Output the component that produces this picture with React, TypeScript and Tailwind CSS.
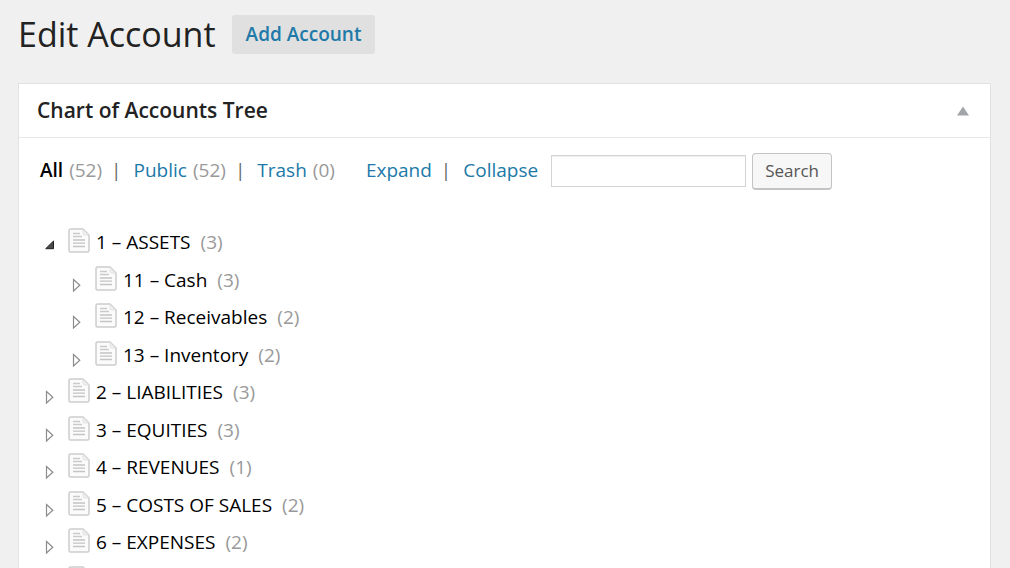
import React, { useState } from "react";

type Account = { label: string; count: number | null; level: 1 | 2; open?: boolean };

const accounts: Account[] = [
  { label: "1 – ASSETS", count: 3, level: 1, open: true },
  { label: "11 – Cash", count: 3, level: 2 },
  { label: "12 – Receivables", count: 2, level: 2 },
  { label: "13 – Inventory", count: 2, level: 2 },
  { label: "2 – LIABILITIES", count: 3, level: 1 },
  { label: "3 – EQUITIES", count: 3, level: 1 },
  { label: "4 – REVENUES", count: 1, level: 1 },
  { label: "5 – COSTS OF SALES", count: 2, level: 1 },
  { label: "6 – EXPENSES", count: 2, level: 1 },
  { label: "", count: null, level: 1 },
];

function DocumentIcon() {
  return (
    <svg width="22" height="25" viewBox="0 0 22 25" fill="none" className="shrink-0" aria-hidden="true">
      <path
        d="M2.5 1H15L21 7V22.5Q21 24 19.5 24H2.5Q1 24 1 22.5V2.5Q1 1 2.5 1Z"
        fill="#fbfbfb"
        stroke="#cdcdcd"
        strokeWidth="1.5"
      />
      <path d="M15 1.5V5.5Q15 7 16.5 7H20.5Z" fill="#f0f0f0" stroke="#dedede" strokeWidth="0.8" />
      <path d="M5 5.5H12M5 8.5H14" stroke="#cacaca" strokeWidth="1.3" />
      <path d="M5 12H17M5 15.2H17M5 18.5H17" stroke="#c4c4c4" strokeWidth="1.3" />
    </svg>
  );
}

function Arrow({ open }: { open?: boolean }) {
  return (
    <svg width="12" height="14" viewBox="0 0 12 14" aria-hidden="true">
      {open ? (
        <path d="M9.5 1V8.7H1.7Z" fill="#4a4a4a" stroke="#222" />
      ) : (
        <path d="M2.5 1.5L8.8 7.2L2.5 13Z" fill="#fff" stroke="#8c8c8c" strokeWidth="1.2" />
      )}
    </svg>
  );
}

function Row({ account }: { account: Account }) {
  return (
    <li
      role="treeitem"
      aria-level={account.level}
      aria-expanded={!!account.open}
      className={account.level === 2 ? "flex items-start pl-[27px]" : "flex items-start"}
    >
      <button type="button" aria-label="Toggle" className="mt-4 mr-3 h-[14px] w-3 shrink-0">
        <Arrow open={account.open} />
      </button>
      <span className="mt-1 mr-1.5">
        <DocumentIcon />
      </span>
      {account.count !== null && (
        <span className="flex gap-2.5 leading-9 whitespace-nowrap">
          <a href="#account" className="text-black">{account.label}</a>
          <span className="text-[#999]">({account.count})</span>
        </span>
      )}
    </li>
  );
}

function Separator() {
  return <span className="mr-3 ml-[9px] text-[#666]">|</span>;
}

export default function App() {
  const [query, setQuery] = useState("");
  return (
    <div className="h-screen overflow-hidden bg-[#f0f0f0] pt-[14px] pr-[19px] pl-[18px] font-['Open_Sans',sans-serif] text-[19px] text-[#222]">
      <header className="flex h-10 items-center gap-4">
        <h1 className="text-[34px] leading-10 font-normal">Edit Account</h1>
        <a href="#add" className="rounded-[3px] bg-[#e0e0e0] px-[14px] leading-[39px] font-semibold text-[#2079a8]">
          Add Account
        </a>
      </header>

      <section className="mt-[29px] border border-[#e2e2e2] bg-white pb-6">
        <div className="flex h-[54px] items-center justify-between border-b border-[#e8e8e8] pr-5 pl-[18px]">
          <h2 className="text-[21px] font-semibold">Chart of Accounts Tree</h2>
          <button type="button" aria-label="Collapse panel">
            <svg width="14" height="10" viewBox="0 0 14 10" aria-hidden="true">
              <path d="M7 0.5L13 9.5H1Z" fill="#a2a5a9" />
            </svg>
          </button>
        </div>

        <div className="flex h-[65px] items-center pl-[21px] whitespace-nowrap">
          <nav className="flex items-center">
            <a href="#all" className="font-semibold text-black">All</a>
            <span className="ml-1.5 text-[#999]">(52)</span>
            <Separator />
            <a href="#public" className="text-[#2079a8]">Public</a>
            <span className="ml-1.5 text-[#999]">(52)</span>
            <Separator />
            <a href="#trash" className="text-[#2079a8]">Trash</a>
            <span className="ml-1.5 text-[#999]">(0)</span>
          </nav>
          <div className="ml-[31px] flex items-center">
            <a href="#expand" className="text-[#2079a8]">Expand</a>
            <Separator />
            <a href="#collapse" className="text-[#2079a8]">Collapse</a>
          </div>
          <form className="ml-[13px] flex items-center gap-1.5" onSubmit={(e) => e.preventDefault()}>
            <input
              type="text"
              aria-label="Search accounts"
              value={query}
              onChange={(e) => setQuery(e.target.value)}
              className="h-8 w-[195px] border border-[#d4d4d4] bg-white px-2 shadow-[inset_0_1px_1px_#eee]"
            />
            <button
              type="submit"
              className="mt-0.5 h-[37px] rounded-[4px] border border-b-2 border-[#c4c4c4] bg-[#f7f7f7] px-3 text-[17px] leading-8 text-[#555]"
            >
              Search
            </button>
          </form>
        </div>

        <ul role="tree" aria-label="Chart of accounts" className="mt-[21px] grid h-[375px] grid-rows-10 pl-[25px]">
          {accounts.map((account, i) => (
            <Row key={i} account={account} />
          ))}
        </ul>
      </section>
    </div>
  );
}
